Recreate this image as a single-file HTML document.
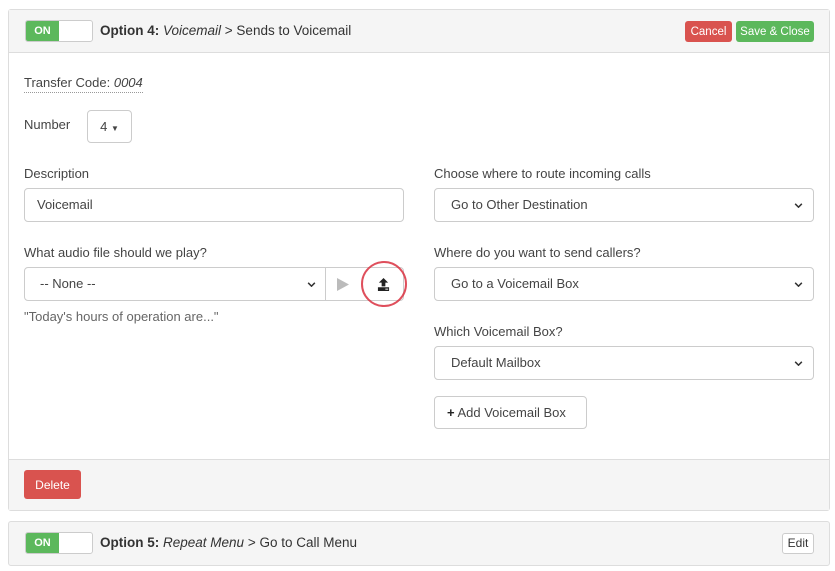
<!DOCTYPE html>
<html><head><meta charset="utf-8"><style>
*{box-sizing:border-box;margin:0;padding:0}
body{width:835px;height:571px;background:#fff;font-family:"Liberation Sans",sans-serif;font-size:13px;color:#333;position:relative;overflow:hidden}
.a{position:absolute}
.panel{position:absolute;left:8px;width:822px;border:1px solid #ddd;border-radius:3px;background:#fff}
.hdr{background:#f5f5f5;border-bottom:1px solid #ddd}
.tog{position:absolute;left:16px;width:68px;height:22px;border:1px solid #ccc;border-radius:3px;background:#fff;overflow:hidden}
.tog span{position:absolute;left:0;top:0;bottom:0;width:33px;background:#5cb85c;color:#fff;font-size:11px;font-weight:bold;display:flex;align-items:center;justify-content:center}
.inp{position:absolute;height:34px;border:1px solid #ccc;border-radius:4px;background:#fff;padding-left:12px;line-height:32px;color:#444}
.chev{position:absolute;right:10px;top:14px;width:9px;height:5px}
.btn{position:absolute;border-radius:3px;color:#fff;font-size:11.5px;display:flex;align-items:center;justify-content:center}
.lbl{position:absolute;color:#444}
</style></head><body>
<div class="panel" style="top:9px;height:502px">
  <div class="hdr" style="height:43px;position:relative">
    <div class="tog" style="top:10px"><span>ON</span></div>
    <div class="a" style="left:91px;top:13px;font-size:13.5px"><b>Option 4:</b> <i>Voicemail</i> &gt; Sends to Voicemail</div>
    <div class="btn" style="left:676px;top:11px;width:47px;height:21px;background:#d9534f">Cancel</div>
    <div class="btn" style="left:727px;top:11px;width:78px;height:21px;background:#5cb85c">Save &amp; Close</div>
  </div>
  <div class="a" style="left:0;right:0;top:449px;bottom:0;background:#f5f5f5;border-top:1px solid #ddd">
    <div class="btn" style="left:15px;top:10px;width:57px;height:29px;background:#d9534f;font-size:12px">Delete</div>
  </div>
</div>
<div class="lbl" style="left:24px;top:75px;border-bottom:1px dotted #999;padding-bottom:2px">Transfer Code: <i>0004</i></div>
<div class="lbl" style="left:24px;top:117px">Number</div>
<div class="a" style="left:87px;top:110px;width:45px;height:33px;border:1px solid #ccc;border-radius:4px;text-align:center;line-height:31px;color:#444">4 <span style="font-size:8px">&#9660;</span></div>
<div class="lbl" style="left:24px;top:166px">Description</div>
<div class="inp" style="left:24px;top:188px;width:380px">Voicemail</div>
<div class="lbl" style="left:24px;top:245px">What audio file should we play?</div>
<div class="inp" style="left:24px;top:267px;width:380px;padding-left:15px">-- None --
  <svg class="chev" style="right:87px" viewBox="0 0 10 6"><path d="M1 1l4 4 4-4" stroke="#333" stroke-width="1.8" fill="none"/></svg>
  <div class="a" style="left:300px;top:-1px;width:1px;height:34px;background:#ccc"></div>
  <svg class="a" style="left:312px;top:10px" width="12" height="13" viewBox="0 0 12 13"><path d="M0 0L12 6.5 0 13z" fill="#bbb"/></svg>
  <svg class="a" style="left:352px;top:10px" width="13" height="13" viewBox="0 0 14 14"><path d="M7 0L12 5H9v4H5V5H2z M1 10h12v4H1z" fill="#222"/><rect x="9" y="11.5" width="3" height="1" fill="#fff"/></svg>
</div>
<div class="a" style="left:361px;top:261px;width:46px;height:46px;border:2px solid #d9303f;border-radius:50%;opacity:.85"></div>
<div class="lbl" style="left:24px;top:309px;color:#666">"Today's hours of operation are..."</div>
<div class="lbl" style="left:434px;top:166px">Choose where to route incoming calls</div>
<div class="inp" style="left:434px;top:188px;width:380px;padding-left:16px">Go to Other Destination<svg class="chev" viewBox="0 0 10 6"><path d="M1 1l4 4 4-4" stroke="#333" stroke-width="1.8" fill="none"/></svg></div>
<div class="lbl" style="left:434px;top:245px">Where do you want to send callers?</div>
<div class="inp" style="left:434px;top:267px;width:380px;padding-left:16px">Go to a Voicemail Box<svg class="chev" viewBox="0 0 10 6"><path d="M1 1l4 4 4-4" stroke="#333" stroke-width="1.8" fill="none"/></svg></div>
<div class="lbl" style="left:434px;top:324px">Which Voicemail Box?</div>
<div class="inp" style="left:434px;top:346px;width:380px;padding-left:16px">Default Mailbox<svg class="chev" viewBox="0 0 10 6"><path d="M1 1l4 4 4-4" stroke="#333" stroke-width="1.8" fill="none"/></svg></div>
<div class="inp" style="left:434px;top:396px;width:153px;height:33px;line-height:31px"><b style="color:#222">+</b> Add Voicemail Box</div>
<div class="panel hdr" style="top:521px;height:45px">
  <div class="tog" style="top:10px"><span>ON</span></div>
  <div class="a" style="left:91px;top:13px;font-size:13.5px"><b>Option 5:</b> <i>Repeat Menu</i> &gt; Go to Call Menu</div>
  <div class="a" style="left:773px;top:11px;width:32px;height:21px;border:1px solid #ccc;border-radius:3px;background:#fff;font-size:12px;text-align:center;line-height:19px">Edit</div>
</div>
</body></html>
